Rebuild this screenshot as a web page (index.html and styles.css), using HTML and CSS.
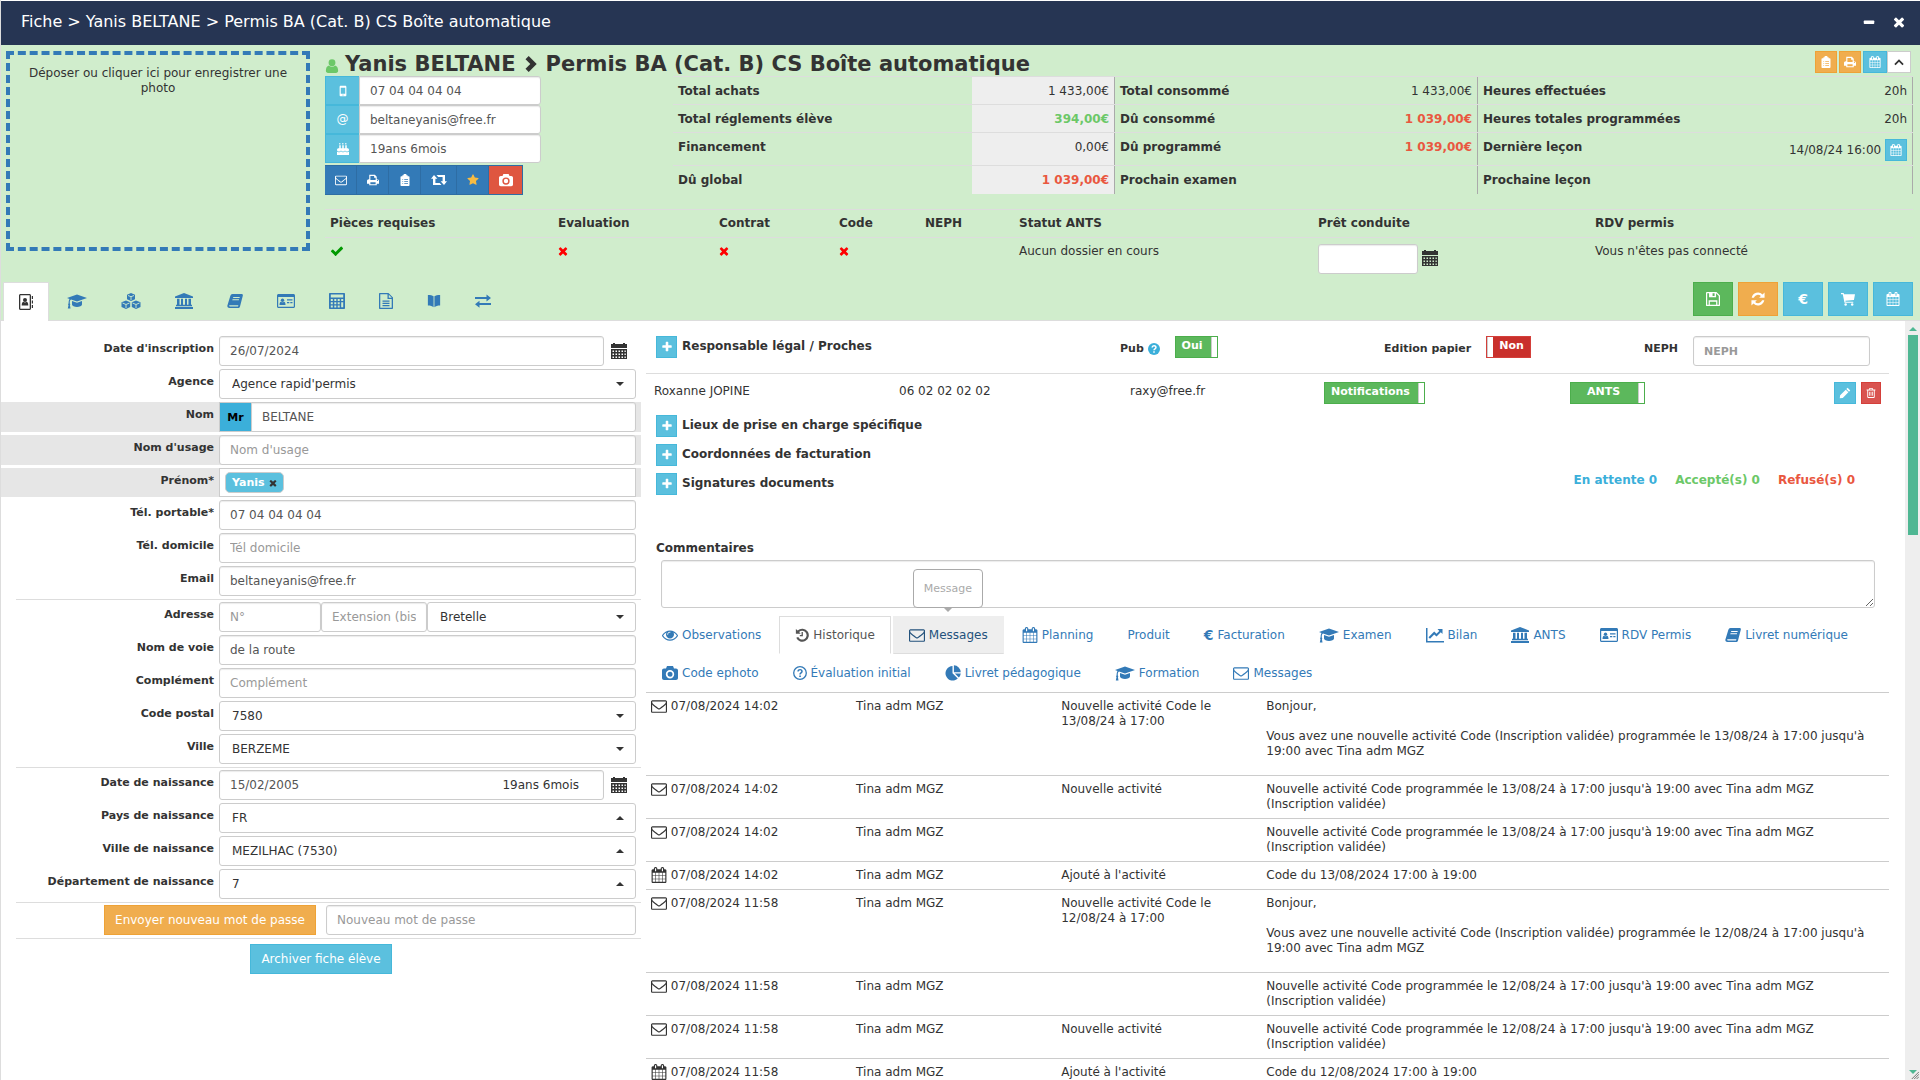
FILE: index.html
```html
<!DOCTYPE html>
<html lang="fr">
<head>
<meta charset="utf-8">
<title>Fiche élève</title>
<link rel="stylesheet" href="styles.css">
</head>
<body>
<svg class="sprite" aria-hidden="true">
  <symbol id="envelope" viewBox="0 0 1792 1792"><path d="M1664 1504v-768q-32 36-69 66-268 206-426 338-51 43-83 67t-86.5 48.5-102.5 24.5h-2q-48 0-102.5-24.5t-86.5-48.5-83-67q-158-132-426-338-37-30-69-66v768q0 13 9.5 22.5t22.5 9.5h1472q13 0 22.5-9.5t9.5-22.5zm0-1051v-24.5l-.5-13-3-12.5-5.5-9-9-7.5-14-2.5h-1472q-13 0-22.5 9.5t-9.5 22.5q0 168 147 284 193 152 401 317 6 5 35 29.5t46 37.5 44.5 31.5 50.5 27.5 43 9h2q20 0 43-9t50.5-27.5 44.5-31.5 46-37.5 35-29.5q208-165 401-317 54-43 100.5-115.5t46.5-131.5zm128-37v1088q0 66-47 113t-113 47h-1472q-66 0-113-47t-47-113v-1088q0-66 47-113t113-47h1472q66 0 113 47t47 113z"/></symbol>
  <symbol id="times" viewBox="192 192 1408 1408"><path d="M1490 1322q0 40-28 68l-136 136q-28 28-68 28t-68-28l-294-294-294 294q-28 28-68 28t-68-28l-136-136q-28-28-28-68t28-68l294-294-294-294q-28-28-28-68t28-68l136-136q28-28 68-28t68 28l294 294 294-294q28-28 68-28t68 28l136 136q28 28 28 68t-28 68l-294 294 294 294q28 28 28 68z"/></symbol>
  <symbol id="check" viewBox="0 0 1792 1792"><path d="M1671 566q0 40-28 68l-724 724-136 136q-28 28-68 28t-68-28l-136-136-362-362q-28-28-28-68t28-68l136-136q28-28 68-28t68 28l294 295 656-657q28-28 68-28t68 28l136 136q28 28 28 68z"/></symbol>
  <symbol id="plus" viewBox="0 0 1792 1792"><path d="M1600 736v192q0 40-28 68t-68 28h-416v416q0 40-28 68t-68 28h-192q-40 0-68-28t-28-68v-416h-416q-40 0-68-28t-28-68v-192q0-40 28-68t68-28h416v-416q0-40 28-68t68-28h192q40 0 68 28t28 68v416h416q40 0 68 28t28 68z"/></symbol>
  <symbol id="star" viewBox="0 0 1792 1792"><path d="M1728 647q0 22-26 48l-363 354 86 500q1 7 1 20 0 21-10.5 35.5t-30.5 14.5q-19 0-40-12l-449-236-449 236q-22 12-40 12-21 0-31.5-14.5t-10.5-35.5q0-6 2-20l86-500-364-354q-25-27-25-48 0-37 56-46l502-73 225-455q19-41 49-41t49 41l225 455 502 73q56 9 56 46z"/></symbol>
  <symbol id="calendar" viewBox="0 0 1792 1792"><path d="M192 1664h288v-288h-288v288zm352 0h320v-288h-320v288zm-352-352h288v-320h-288v320zm352 0h320v-320h-320v320zm-352-384h288v-288h-288v288zm736 736h320v-288h-320v288zm-384-736h320v-288h-320v288zm768 736h288v-288h-288v288zm-384-352h320v-320h-320v320zm-352-864v-288q0-13-9.5-22.5t-22.5-9.5h-64q-13 0-22.5 9.5t-9.5 22.5v288q0 13 9.5 22.5t22.5 9.5h64q13 0 22.5-9.5t9.5-22.5zm736 864h288v-320h-288v320zm-384-384h320v-288h-320v288zm384 0h288v-288h-288v288zm32-480v-288q0-13-9.5-22.5t-22.5-9.5h-64q-13 0-22.5 9.5t-9.5 22.5v288q0 13 9.5 22.5t22.5 9.5h64q13 0 22.5-9.5t9.5-22.5zm384-64v1280q0 52-38 90t-90 38h-1408q-52 0-90-38t-38-90v-1280q0-52 38-90t90-38h128v-96q0-66 47-113t113-47h64q66 0 113 47t47 113v96h384v-96q0-66 47-113t113-47h64q66 0 113 47t47 113v96h128q52 0 90 38t38 90z"/></symbol>
  <symbol id="eye" viewBox="0 0 1792 1792"><path d="M1664 960q-152-236-381-353 61 104 61 225 0 185-131.5 316.5t-316.5 131.5-316.5-131.5-131.5-316.5q0-121 61-225-229 117-381 353 133 205 333.5 326.5t434.5 121.5 434.5-121.5 333.5-326.5zm-720-384q0-20-14-34t-34-14q-125 0-214.5 89.5t-89.5 214.5q0 20 14 34t34 14 34-14 14-34q0-86 61-147t147-61q20 0 34-14t14-34zm848 384q0 34-20 69-140 230-376.5 368.5t-499.5 138.5-499.5-139-376.5-368q-20-35-20-69t20-69q140-229 376.5-368t499.5-139 499.5 139 376.5 368q20 35 20 69z"/></symbol>
  <symbol id="minus" viewBox="0 0 16 16"><rect x="1" y="6" width="14" height="4.500" rx="1"/></symbol>
  <symbol id="user" viewBox="0 0 16 16"><circle cx="8" cy="4.200" r="3.900"/><path d="M4.500 7.500C2 8 1 10.500 1 13.500c0 1.600 1 2.500 2.500 2.500h9c1.500 0 2.500-.9 2.500-2.500 0-3-1-5.500-3.500-6C10 9.300 6 9.300 4.500 7.500z"/></symbol>
  <symbol id="chevron-right" viewBox="0 0 16 16"><path d="M2.500 3.200 5.700 0l8 8-8 8-3.200-3.200L7.300 8z"/></symbol>
  <symbol id="chevron-up" viewBox="0 0 16 16"><path d="M2.500 13 .5 11 8 3.500l7.500 7.500-2 2L8 7.500z"/></symbol>
  <symbol id="mobile" viewBox="0 0 16 16"><path fill-rule="evenodd" d="M5 1h6c.8 0 1.500.7 1.500 1.500v11c0 .8-.7 1.500-1.500 1.500H5c-.8 0-1.500-.7-1.500-1.500v-11C3.500 1.700 4.200 1 5 1zm0 2.500v8h6v-8zm2.200 9.800a.8.800 0 1 0 1.600 0 .8.800 0 1 0-1.600 0z"/></symbol>
  <symbol id="cake" viewBox="0 0 16 16"><path d="M3 3h2v4H3zm4 0h2v4H7zm4 0h2v4h-2zM3 0h1.500v2H3zm4 0h1.500v2H7zm4 0h1.500v2H11zM2 7h12c1 0 2 .8 2 2v1.300c-1 0-1.500 1-2.700 1s-1.600-1-2.600-1-1.500 1-2.700 1-1.700-1-2.700-1-1.500 1-2.600 1S1 10.300 0 10.300V9c0-1.200 1-2 2-2zM0 11.500c1 0 1.500.9 2.700.9s1.600-1 2.600-1 1.500 1 2.700 1 1.700-1 2.700-1 1.500 1 2.600 1 1.700-.9 2.700-.9V16H0z"/></symbol>
  <symbol id="print" viewBox="0 0 16 16"><path fill-rule="evenodd" d="M3 1h7.500L13 3.500V7h.5C15 7 16 8 16 9.300V13h-3v2H3v-2H0V9.300C0 8 1 7 2.500 7H3zm1.500 1.500V8h7V5H9.500V2.500zm0 8.500v2.500h7V11zm8.700-2.500a.7.700 0 1 0 1.400 0 .7.700 0 1 0-1.400 0z"/></symbol>
  <symbol id="clipboard" viewBox="0 0 16 16"><path fill-rule="evenodd" d="M6 1.500a2 2 0 0 1 4 0h1.500V3H13c.6 0 1 .4 1 1v11c0 .6-.4 1-1 1H3c-.6 0-1-.4-1-1V4c0-.6.4-1 1-1h1.500V1.500zM4.500 7v1h1V7zm2.500 0v1h5V7zm-2.500 2.500v1h1v-1zm2.500 0v1h5v-1zM4.500 12v1h1v-1zm2.500 0v1h5v-1z"/></symbol>
  <symbol id="retweet" viewBox="0 0 16 16"><path d="M3 3 0 6.800h2V13h8.500L8.700 11H4.400V6.800h2zM13 13l3-3.800h-2V3H5.500l1.800 2h4.300v4.200h-2z"/></symbol>
  <symbol id="camera" viewBox="0 0 16 16"><path fill-rule="evenodd" d="M5 1h6l1 2.500h2c1.100 0 2 .9 2 2V13c0 1.100-.9 2-2 2H2c-1.100 0-2-.9-2-2V5.500c0-1.100.9-2 2-2h2zm3 4a4.200 4.200 0 1 0 0 8.400A4.200 4.200 0 0 0 8 5zm0 1.700a2.500 2.500 0 1 1 0 5 2.500 2.500 0 0 1 0-5z"/></symbol>
  <symbol id="address-book" viewBox="0 0 16 16"><path fill-rule="evenodd" d="M2.500 0h9c.8 0 1.500.7 1.500 1.500v13c0 .8-.7 1.500-1.500 1.500h-9c-.8 0-1.500-.7-1.500-1.500v-13C1 .7 1.700 0 2.500 0zm-.2 1.300v13.400h9.400V1.300z"/><circle cx="7" cy="6" r="2"/><path d="M3.700 11.500c0-2.500.8-3.500 1.800-3.700 1 .8 2 .8 3 0 1 .2 1.800 1.200 1.800 3.700zM13.800 2H15v3h-1.200zm0 4.500H15v3h-1.200zm0 4.500H15v3h-1.200z"/></symbol>
  <symbol id="graduation" viewBox="0 0 20 16"><path d="M10 1.500 20 5l-10 3.500L4 6.400l-.8.8c-.5 1-.5 2-.4 3.200.7.500.6 1.200.1 1.600l.6 3.500H.8l.7-3.500c-.6-.5-.5-1.200.1-1.600 0-1.500.1-3 .9-4.400L0 5zM5 8l5 1.800L15 8v3.500c0 3.300-10 3.300-10 0z"/></symbol>
  <symbol id="cubes" viewBox="0 0 20 16"><path d="M10 0l4 1.700v4.600L10 8 6 6.300V1.700zM5 7.500l4.200 1.700v4.800L5 16l-4.500-2V9.200zM15 7.500l4.500 1.700V14L15 16l-4.200-2V9.200z"/><path d="M7 2.500l3 1.200 3-1.200M10 3.700V7M1.500 10 5 11.500 8.500 10M5 11.500V15M11.500 10l3.500 1.500 3.500-1.500M15 11.500V15" fill="none" stroke="#d0edcc" stroke-width=".9"/></symbol>
  <symbol id="university" viewBox="0 0 18 16"><path d="M9 0l9 3.500V5H0V3.500zM2 5.800h2.500v6H6v-6h2v6h2v-6h2v6h1.500v-6H16v6h1v1.500H1v-1.500h1zM0 14h18v2H0z"/></symbol>
  <symbol id="book" viewBox="0 0 16 16"><path fill-rule="evenodd" d="M5.500 1h9c1 0 1.600.8 1.300 1.800L13 13.500c-.3 1-1 1.500-2 1.500H2.500C1 15 0 13.700.4 12.400L3.300 3C3.700 1.700 4.400 1 5.500 1zm.8 3-.3 1h6.500l.3-1zm-.7 2.300-.3 1h6.500l.3-1zM2.300 12.300c-.2.700 0 1.200.7 1.200h8l.4-1.200z"/></symbol>
  <symbol id="id-card" viewBox="0 0 18 16"><path fill-rule="evenodd" d="M1.500 1h15c.8 0 1.500.7 1.500 1.500v11c0 .8-.7 1.500-1.500 1.500h-15C.7 15 0 14.300 0 13.500v-11C0 1.700.7 1 1.500 1zM1.200 4v9.800h15.600V4z"/><circle cx="5.500" cy="7.200" r="1.700"/><path d="M2.500 12c0-2 .5-3 1.500-3.300 1 .8 2 .8 3 0 1 .3 1.500 1.300 1.500 3.300zM10 6.300h5.500v1.200H10zM10 9h2.300v1.200H10zm3.300 0h2.200v1.200h-2.200z"/></symbol>
  <symbol id="calculator" viewBox="0 0 16 16"><path fill-rule="evenodd" d="M1 0h14c.6 0 1 .4 1 1v14c0 .6-.4 1-1 1H1c-.6 0-1-.4-1-1V1c0-.6.4-1 1-1zm.8 1.500v3h12.400v-3zm0 4.500v2h2v-2zm3.500 0v2h2v-2zm3.400 0v2h2v-2zm3.500 0v2h2v-2zM1.800 9.300v2h2v-2zm3.500 0v2h2v-2zm3.400 0v2h2v-2zm3.500 0v5h2v-5zM1.800 12.500v2h2v-2zm3.500 0v2h2v-2zm3.400 0v2h2v-2z"/></symbol>
  <symbol id="file-text" viewBox="0 0 14 16"><path fill-rule="evenodd" d="M1 0h8.500L14 4.500V15c0 .6-.4 1-1 1H1c-.6 0-1-.4-1-1V1c0-.6.4-1 1-1zm.3 1.300v13.400h11.400V6H8.500V1.300zm8.500.5v3h3zM3.500 7.500h7v1.200h-7zm0 2.300h7V11h-7zm0 2.300h7v1.200h-7z"/></symbol>
  <symbol id="open-book" viewBox="0 0 16 16"><path d="M1 1c3 0 5 .3 6.500 1.500V15C6 13.500 4 13 1 13zM15 1c-3 0-5 .3-6.500 1.500V15c1.500-1.500 3.500-2 6.500-2z"/></symbol>
  <symbol id="exchange" viewBox="0 0 16 16"><path d="M0 4h11.500V1.500L16 5l-4.500 3.500V6H0zM16 10H4.500V7.800L0 11.300l4.500 3.500V12H16z"/></symbol>
  <symbol id="floppy" viewBox="0 0 16 16"><path fill-rule="evenodd" d="M1 0h11l4 4v11c0 .6-.4 1-1 1H1c-.6 0-1-.4-1-1V1c0-.6.4-1 1-1zm.4 1.400v13.200H3V9.500h10v5.100h1.600V4.700l-3.100-3.200V6H3.500V1.400zm6.100 0v3.300h2.300V1.400zM4.400 11v3.600h7.200V11z"/></symbol>
  <symbol id="refresh" viewBox="0 0 16 16"><path d="M.8 6.500A7.300 7.300 0 0 1 13.200 2.800L15.500.7v6H9.300l2-2A4.800 4.800 0 0 0 3.300 6.500zM15.200 9.500A7.300 7.300 0 0 1 2.800 13.200L.5 15.300v-6h6.200l-2 2a4.800 4.800 0 0 0 8-1.800z"/></symbol>
  <symbol id="cart" viewBox="0 0 16 16"><path d="M0 1h3l.5 1.600H16L14.800 9 5 10l.2 1H14v1.400H4L2 2.500H0z"/><circle cx="5.300" cy="14.300" r="1.400"/><circle cx="12.800" cy="14.300" r="1.400"/></symbol>
  <symbol id="question" viewBox="0 0 16 16"><circle cx="8" cy="8" r="8"/><path d="M5.500 6C5.600 2.700 10.600 3 10.600 6 10.600 7.800 8 7.800 8 9.700" fill="none" stroke="#fff" stroke-width="2"/><path d="M7 11h2v2H7z" fill="#fff"/></symbol>
  <symbol id="question-o" viewBox="0 0 16 16"><circle cx="8" cy="8" r="7.200" fill="none" stroke="currentColor" stroke-width="1.500"/><path d="M5.800 6.300C5.800 3.300 10.300 3.600 10.300 6.200 10.300 7.800 8 7.800 8 9.700" fill="none" stroke="currentColor" stroke-width="1.700"/><path d="M7.100 10.800h1.900v1.900H7.100z"/></symbol>
  <symbol id="pencil" viewBox="0 0 16 16"><path d="M11.500 1 15 4.500 13.300 6.200 9.800 2.700zM9 3.500 12.500 7 5 14.500 1 15l.5-4z"/></symbol>
  <symbol id="trash" viewBox="0 0 16 16"><path fill-rule="evenodd" d="M5.500 0h5l1 2.500H15V4h-1v10.500c0 .8-.6 1.500-1.400 1.500H3.400C2.600 16 2 15.300 2 14.500V4H1V2.500h3.500zm.8 1.200-.5 1.300h4.400l-.5-1.300zM3.500 4v10.500h9V4zM5 6h1.200v6.500H5zm2.400 0h1.200v6.500H7.400zm2.400 0H11v6.500H9.800z"/></symbol>
  <symbol id="history" viewBox="0 0 16 16"><path d="M1 1v5.500h5.500L4.700 4.700a5 5 0 1 1-1 5.600l-2.300.9A7.500 7.500 0 1 0 3 2.900zM7.500 4.500H9v5H5.500V8h2z"/></symbol>
  <symbol id="pie" viewBox="0 0 16 16"><path d="M7.500 1v7.300l5.300 5.300A7.300 7.300 0 1 1 7.500 1zM8.900.3A7 7 0 0 1 15.700 7.200H8.900zM9.800 8.600h6a7 7 0 0 1-2 4z"/></symbol>
  <symbol id="chart" viewBox="0 0 18 16"><path d="M0 1h1.500v13H18v1.500H0zM16.500 2v5l-1.700-1.700L10.500 9.600l-2.300-2.200L4 11.700 2.500 10.200l5.700-5.700 2.300 2.300L13.300 4 11.500 2z"/></symbol>
  <symbol id="date-grid" viewBox="0 0 16 16"><path fill-rule="evenodd" d="M2 0h2v1h8V0h2v1h2v4H0V1h2zM0 6h16v10H0zm1.500 1.500V9H3V7.500zm3 0V9H6V7.500zm3 0V9H9V7.500zm3 0V9H12V7.500zm3 0V9h1.300V7.500zm-12 3V12H3v-1.500zm3 0V12H6v-1.500zm3 0V12H9v-1.500zm3 0V12H12v-1.500zm3 0V12h1.300v-1.500zm-12 3V15H3v-1.500zm3 0V15H6v-1.500zm3 0V15H9v-1.500zm3 0V15H12v-1.500zm3 0V15h1.300v-1.500z"/></symbol>
  <symbol id="grip" viewBox="0 0 10 10"><path d="M1 10 10 1M4 10l6-6M7 10l3-3" stroke="#555" stroke-width="1" fill="none"/></symbol>
</svg>

<div class="app">
  <header class="titlebar">
    <h1>Fiche &gt; Yanis BELTANE &gt; Permis BA (Cat. B) CS Boîte automatique</h1>
    <div class="window-actions">
      <button type="button" aria-label="Réduire"><svg class="i12"><use href="#minus"/></svg></button>
      <button type="button" aria-label="Fermer"><svg class="i12"><use href="#times"/></svg></button>
    </div>
  </header>

  <section class="summary">
    <div class="summary-top">
      <button type="button" class="dropzone">Déposer ou cliquer ici pour enregistrer une photo</button>
      <div class="summary-main">
        <div class="summary-title">
          <h2><svg class="i14 green"><use href="#user"/></svg><span>Yanis BELTANE</span><svg class="i18"><use href="#chevron-right"/></svg><span>Permis BA (Cat. B) CS Boîte automatique</span></h2>
          <div class="quick">
            <button type="button" class="btn sm orange" aria-label="Dossier"><svg class="i12"><use href="#clipboard"/></svg></button>
            <button type="button" class="btn sm orange" aria-label="Imprimer"><svg class="i12"><use href="#print"/></svg></button>
            <span class="joined"><button type="button" class="btn sm info" aria-label="Calendrier"><svg class="i12"><use href="#calendar"/></svg></button><button type="button" class="btn sm plain" aria-label="Replier"><svg class="i10"><use href="#chevron-up"/></svg></button></span>
          </div>
        </div>
        <div class="summary-data">
          <div class="contact">
            <div class="group"><label for="c-tel"><svg class="i12"><use href="#mobile"/></svg></label><input id="c-tel" value="07 04 04 04 04"></div>
            <div class="group"><label for="c-mail">@</label><input id="c-mail" value="beltaneyanis@free.fr"></div>
            <div class="group"><label for="c-age"><svg class="i12"><use href="#cake"/></svg></label><input id="c-age" value="19ans 6mois"></div>
            <div class="toolbar">
              <button type="button" aria-label="Message"><svg class="i12"><use href="#envelope"/></svg></button>
              <button type="button" aria-label="Imprimer"><svg class="i12"><use href="#print"/></svg></button>
              <button type="button" aria-label="Dossier"><svg class="i12"><use href="#clipboard"/></svg></button>
              <button type="button" aria-label="Transférer"><svg class="i16"><use href="#retweet"/></svg></button>
              <button type="button" class="gold" aria-label="Favori"><svg class="i12"><use href="#star"/></svg></button>
              <button type="button" class="danger" aria-label="Photo"><svg class="i14"><use href="#camera"/></svg></button>
            </div>
          </div>
          <table class="stats shaded">
            <tr><th>Total achats</th><td>1 433,00€</td></tr>
            <tr><th>Total réglements élève</th><td class="pos">394,00€</td></tr>
            <tr class="tall"><th>Financement</th><td>0,00€</td></tr>
            <tr><th>Dû global</th><td class="neg">1 039,00€</td></tr>
          </table>
          <table class="stats">
            <tr><th>Total consommé</th><td>1 433,00€</td></tr>
            <tr><th>Dû consommé</th><td class="neg">1 039,00€</td></tr>
            <tr class="tall"><th>Dû programmé</th><td class="neg">1 039,00€</td></tr>
            <tr><th>Prochain examen</th><td></td></tr>
          </table>
          <table class="stats">
            <tr><th>Heures effectuées</th><td>20h</td></tr>
            <tr><th>Heures totales programmées</th><td>20h</td></tr>
            <tr class="tall"><th>Dernière leçon</th><td class="lesson">14/08/24 16:00 <button type="button" class="btn sm info" aria-label="Voir la leçon"><svg class="i12"><use href="#calendar"/></svg></button></td></tr>
            <tr><th>Prochaine leçon</th><td></td></tr>
          </table>
        </div>
        <table class="status">
          <colgroup><col class="k1"><col class="k2"><col class="k3"><col class="k4"><col class="k5"><col class="k6"><col class="k7"><col></colgroup>
          <thead><tr><th>Pièces requises</th><th>Evaluation</th><th>Contrat</th><th>Code</th><th>NEPH</th><th>Statut ANTS</th><th>Prêt conduite</th><th>RDV permis</th></tr></thead>
          <tbody><tr>
            <td><svg class="i14 yes"><use href="#check"/></svg></td>
            <td><svg class="i10 no"><use href="#times"/></svg></td>
            <td><svg class="i10 no"><use href="#times"/></svg></td>
            <td><svg class="i10 no"><use href="#times"/></svg></td>
            <td></td>
            <td>Aucun dossier en cours</td>
            <td><span class="ready"><input aria-label="Prêt conduite"><svg class="i16"><use href="#date-grid"/></svg></span></td>
            <td>Vous n'êtes pas connecté</td>
          </tr></tbody>
        </table>
      </div>
    </div>
    <div class="summary-nav">
      <nav class="icon-tabs">
        <a href="#" class="active" aria-label="Identité"><svg class="i16"><use href="#address-book"/></svg></a>
        <a href="#" aria-label="Formation"><svg class="i20"><use href="#graduation"/></svg></a>
        <a href="#" aria-label="Produits"><svg class="i20"><use href="#cubes"/></svg></a>
        <a href="#" aria-label="ANTS"><svg class="i18"><use href="#university"/></svg></a>
        <a href="#" aria-label="Livret"><svg class="i16"><use href="#book"/></svg></a>
        <a href="#" aria-label="Permis"><svg class="i18"><use href="#id-card"/></svg></a>
        <a href="#" aria-label="Comptabilité"><svg class="i16"><use href="#calculator"/></svg></a>
        <a href="#" aria-label="Documents"><svg class="sheet"><use href="#file-text"/></svg></a>
        <a href="#" aria-label="Code"><svg class="i14"><use href="#open-book"/></svg></a>
        <a href="#" aria-label="Échanges"><svg class="i16"><use href="#exchange"/></svg></a>
      </nav>
      <div class="actions">
        <button type="button" class="btn lg success" aria-label="Enregistrer"><svg class="i14"><use href="#floppy"/></svg></button>
        <button type="button" class="btn lg orange" aria-label="Actualiser"><svg class="i14"><use href="#refresh"/></svg></button>
        <button type="button" class="btn lg info euro" aria-label="Paiement">€</button>
        <button type="button" class="btn lg info" aria-label="Panier"><svg class="i14"><use href="#cart"/></svg></button>
        <button type="button" class="btn lg info" aria-label="Planning"><svg class="i14"><use href="#calendar"/></svg></button>
      </div>
    </div>
  </section>

  <div class="content">
    <form class="identity">
      <div class="row"><label for="f1">Date d'inscription</label><div class="field dated"><input id="f1" value="26/07/2024"><svg class="i16"><use href="#date-grid"/></svg></div></div>
      <div class="row"><label for="f2">Agence</label><div class="field pick"><select id="f2"><option>Agence rapid'permis</option></select></div></div>
      <div class="row gray"><label for="f3">Nom</label><div class="field civil"><button type="button">Mr</button><input id="f3" value="BELTANE"></div></div>
      <div class="row gray"><label for="f4">Nom d'usage</label><div class="field"><input id="f4" placeholder="Nom d'usage"></div></div>
      <div class="row gray short"><label for="f5">Prénom*</label><div class="field tags"><span class="tag">Yanis <button type="button" aria-label="Retirer"><svg class="i8"><use href="#times"/></svg></button></span><input id="f5"></div></div>
      <div class="row"><label for="f6">Tél. portable*</label><div class="field"><input id="f6" value="07 04 04 04 04"></div></div>
      <div class="row"><label for="f7">Tél. domicile</label><div class="field"><input id="f7" placeholder="Tél domicile"></div></div>
      <div class="row"><label for="f8">Email</label><div class="field"><input id="f8" value="beltaneyanis@free.fr"></div></div>
      <hr>
      <div class="row"><label for="f9">Adresse</label><div class="field street"><input id="f9" placeholder="N°"><input aria-label="Extension" placeholder="Extension (bis, ter)"><div class="pick"><select aria-label="Type de voie"><option>Bretelle</option></select></div></div></div>
      <div class="row"><label for="f10">Nom de voie</label><div class="field"><input id="f10" value="de la route"></div></div>
      <div class="row"><label for="f11">Complément</label><div class="field"><input id="f11" placeholder="Complément"></div></div>
      <div class="row"><label for="f12">Code postal</label><div class="field pick"><select id="f12"><option>7580</option></select></div></div>
      <div class="row"><label for="f13">Ville</label><div class="field pick"><select id="f13"><option>BERZEME</option></select></div></div>
      <hr>
      <div class="row"><label for="f14">Date de naissance</label><div class="field dated"><input id="f14" value="15/02/2005"><span class="age">19ans 6mois</span><svg class="i16"><use href="#date-grid"/></svg></div></div>
      <div class="row"><label for="f15">Pays de naissance</label><div class="field pick up"><select id="f15"><option>FR</option></select></div></div>
      <div class="row"><label for="f16">Ville de naissance</label><div class="field pick up"><select id="f16"><option>MEZILHAC (7530)</option></select></div></div>
      <div class="row"><label for="f17">Département de naissance</label><div class="field pick up"><select id="f17"><option>7</option></select></div></div>
      <hr>
      <div class="password"><button type="button" class="btn orange">Envoyer nouveau mot de passe</button><input type="password" aria-label="Nouveau mot de passe" placeholder="Nouveau mot de passe"></div>
      <hr>
      <div class="archive"><button type="button" class="btn info">Archiver fiche élève</button></div>
    </form>

    <main class="details">
      <div class="options">
        <h3><button type="button" class="btn sm info" aria-label="Ajouter"><svg class="i12"><use href="#plus"/></svg></button>Responsable légal / Proches</h3>
        <div class="opt"><span class="opt-name">Pub <svg class="i12 blue"><use href="#question"/></svg></span><label class="toggle"><span>Oui</span><input type="checkbox" checked></label></div>
        <div class="opt paper"><span class="opt-name">Edition papier</span><label class="toggle off"><input type="checkbox"><span>Non</span></label></div>
        <div class="opt neph"><label class="opt-name" for="neph">NEPH</label><input id="neph" placeholder="NEPH"></div>
      </div>
      <div class="relative">
        <span>Roxanne JOPINE</span><span>06 02 02 02 02</span><span>raxy@free.fr</span>
        <label class="toggle"><span>Notifications</span><input type="checkbox" checked></label>
        <label class="toggle wide"><span>ANTS</span><input type="checkbox" checked></label>
        <div class="edit"><button type="button" class="btn sm info" aria-label="Modifier"><svg class="i12"><use href="#pencil"/></svg></button><button type="button" class="btn sm delete" aria-label="Supprimer"><svg class="i10"><use href="#trash"/></svg></button></div>
      </div>
      <div class="sections">
        <h3><button type="button" class="btn sm info" aria-label="Ajouter"><svg class="i12"><use href="#plus"/></svg></button>Lieux de prise en charge spécifique</h3>
        <h3><button type="button" class="btn sm info" aria-label="Ajouter"><svg class="i12"><use href="#plus"/></svg></button>Coordonnées de facturation</h3>
        <div class="signatures">
          <h3><button type="button" class="btn sm info" aria-label="Ajouter"><svg class="i12"><use href="#plus"/></svg></button>Signatures documents</h3>
          <p><span class="blue">En attente 0</span><span class="pos">Accepté(s) 0</span><span class="neg">Refusé(s) 0</span></p>
        </div>
      </div>
      <div class="comments">
        <label for="comments">Commentaires</label>
        <textarea id="comments"></textarea>
      </div>
      <nav class="tabs">
        <a href="#"><svg class="i16"><use href="#eye"/></svg> Observations</a>
        <a href="#" class="active"><svg class="i14"><use href="#history"/></svg> Historique</a>
        <a href="#" class="hover"><svg class="i16"><use href="#envelope"/></svg> Messages<span class="tip" role="tooltip">Message</span></a>
        <a href="#"><svg class="i16"><use href="#calendar"/></svg> Planning</a>
        <a href="#">Produit</a>
        <a href="#"><b>€</b> Facturation</a>
        <a href="#"><svg class="i20"><use href="#graduation"/></svg> Examen</a>
        <a href="#"><svg class="i18"><use href="#chart"/></svg> Bilan</a>
        <a href="#"><svg class="i18"><use href="#university"/></svg> ANTS</a>
        <a href="#"><svg class="i18"><use href="#id-card"/></svg> RDV Permis</a>
        <a href="#"><svg class="i16"><use href="#book"/></svg> Livret numérique</a>
        <a href="#"><svg class="i16"><use href="#camera"/></svg> Code ephoto</a>
        <a href="#"><svg class="i14"><use href="#question-o"/></svg> Évaluation initial</a>
        <a href="#"><svg class="i16"><use href="#pie"/></svg> Livret pédagogique</a>
        <a href="#"><svg class="i20"><use href="#graduation"/></svg> Formation</a>
        <a href="#"><svg class="i16"><use href="#envelope"/></svg> Messages</a>
      </nav>
      <table class="history">
        <colgroup><col class="narrow"><col class="narrow"><col class="narrow"><col></colgroup>
        <tr><td><svg class="i16"><use href="#envelope"/></svg> 07/08/2024 14:02</td><td>Tina adm MGZ</td><td>Nouvelle activité Code le<br>13/08/24 à 17:00</td><td><p>Bonjour,<br><br>Vous avez une nouvelle activité Code (Inscription validée) programmée le 13/08/24 à 17:00 jusqu'à 19:00 avec Tina adm MGZ</p></td></tr>
        <tr><td><svg class="i16"><use href="#envelope"/></svg> 07/08/2024 14:02</td><td>Tina adm MGZ</td><td>Nouvelle activité</td><td>Nouvelle activité Code programmée le 13/08/24 à 17:00 jusqu'à 19:00 avec Tina adm MGZ<br>(Inscription validée)</td></tr>
        <tr><td><svg class="i16"><use href="#envelope"/></svg> 07/08/2024 14:02</td><td>Tina adm MGZ</td><td></td><td>Nouvelle activité Code programmée le 13/08/24 à 17:00 jusqu'à 19:00 avec Tina adm MGZ<br>(Inscription validée)</td></tr>
        <tr><td><svg class="i16"><use href="#calendar"/></svg> 07/08/2024 14:02</td><td>Tina adm MGZ</td><td>Ajouté à l'activité</td><td>Code du 13/08/2024 17:00 à 19:00</td></tr>
        <tr><td><svg class="i16"><use href="#envelope"/></svg> 07/08/2024 11:58</td><td>Tina adm MGZ</td><td>Nouvelle activité Code le<br>12/08/24 à 17:00</td><td><p>Bonjour,<br><br>Vous avez une nouvelle activité Code (Inscription validée) programmée le 12/08/24 à 17:00 jusqu'à 19:00 avec Tina adm MGZ</p></td></tr>
        <tr><td><svg class="i16"><use href="#envelope"/></svg> 07/08/2024 11:58</td><td>Tina adm MGZ</td><td></td><td>Nouvelle activité Code programmée le 12/08/24 à 17:00 jusqu'à 19:00 avec Tina adm MGZ<br>(Inscription validée)</td></tr>
        <tr><td><svg class="i16"><use href="#envelope"/></svg> 07/08/2024 11:58</td><td>Tina adm MGZ</td><td>Nouvelle activité</td><td>Nouvelle activité Code programmée le 12/08/24 à 17:00 jusqu'à 19:00 avec Tina adm MGZ<br>(Inscription validée)</td></tr>
        <tr><td><svg class="i16"><use href="#calendar"/></svg> 07/08/2024 11:58</td><td>Tina adm MGZ</td><td>Ajouté à l'activité</td><td>Code du 12/08/2024 17:00 à 19:00</td></tr>
      </table>
    </main>

    <div class="scrollbar" aria-hidden="true"><i class="arrow-up"></i><i class="thumb"></i><i class="arrow-down"></i><svg class="grip"><use href="#grip"/></svg></div>
  </div>
</div>
</body>
</html>
```

FILE: styles.css
```css
* { box-sizing: border-box; }

body {
  margin: 0;
  color: #333;
  background: #fff;
  font: 12px/15px "DejaVu Sans", Verdana, sans-serif;
}

h1, h2, h3, p { margin: 0; }

button, input, select, textarea { font: inherit; color: inherit; margin: 0; }

button { cursor: pointer; padding: 0; border: 0; background: none; }

a { color: #337ab7; text-decoration: none; }

svg { fill: currentColor; flex: none; vertical-align: middle; }

.sprite { position: absolute; width: 0; height: 0; }
.i8 { width: 8px; height: 8px; }
.i10 { width: 10px; height: 10px; }
.i12 { width: 12px; height: 12px; }
.i14 { width: 14px; height: 14px; }
.i16 { width: 16px; height: 16px; }
.i18 { width: 18px; height: 16px; }
.i20 { width: 20px; height: 16px; }
.sheet { width: 14px; height: 16px; }

.green, .pos { color: #6cc868; }
.neg { color: #e9573f; }
.blue { color: #3bafda; }
.yes { color: #090; }
.no { color: #f00; }

/* Window frame */
.app {
  display: flex;
  flex-direction: column;
  height: 100vh;
  padding-top: 1px;
  border-left: 1px solid #ddd;
}

.titlebar {
  flex: none;
  display: flex;
  align-items: center;
  justify-content: space-between;
  height: 44px;
  padding: 0 15px 2px 20px;
  color: #fff;
  background: #263553;
}

.titlebar h1 { font-size: 16px; font-weight: normal; line-height: 20px; }

.window-actions { display: flex; gap: 18px; }

/* Buttons */
.btn {
  display: inline-flex;
  align-items: center;
  justify-content: center;
  height: 30px;
  padding: 0 10px;
  border: 1px solid;
  color: #fff;
}

.btn.sm { height: 22px; padding: 0 4px; }
.btn.lg { width: 40px; height: 34px; padding: 0; }
.btn.info { background: #5bc0de; border-color: #46b8da; }
.btn.orange { background: #f0ad4e; border-color: #eea236; }
.btn.success { background: #5cb85c; border-color: #4cae4c; }
.btn.delete { background: #d9534f; border-color: #d43f3a; }
.btn.plain { color: #333; background: #fff; border-color: #ccc; }
.btn.euro { font-size: 14px; font-weight: bold; }

/* Text boxes */
.group input, .field input, .field select, .ready input, .password input, .neph input, .comments textarea {
  min-width: 0;
  width: 100%;
  height: 30px;
  padding: 0 10px;
  border: 1px solid #ccc;
  border-radius: 3px;
  color: #555;
  background: #fff;
  box-shadow: inset 0 1px 1px rgba(0, 0, 0, .08);
}

::placeholder { color: #999; opacity: 1; }

/* Student summary */
.summary {
  flex: none;
  background: #d0edcc;
  border-bottom: 1px solid #ddd;
}

.summary-top {
  display: flex;
  gap: 15px;
  padding: 6px 7px 0 5px;
}

.dropzone {
  flex: none;
  display: flex;
  justify-content: center;
  width: 304px;
  height: 200px;
  padding: 11px 10px;
  border: 4px dashed #337ab7;
}

.summary-main { flex: 1; min-width: 0; }

.summary-title { display: flex; justify-content: space-between; height: 25px; }

.summary-title h2 {
  display: flex;
  align-items: center;
  gap: 6px;
  font-size: 21px;
  line-height: 26px;
  white-space: nowrap;
}

.summary-title h2 .green { margin-top: 4px; }

.quick { display: flex; gap: 2px; padding-right: 2px; }
.joined { display: flex; }
.joined .btn { width: 24px; }

.summary-data { display: grid; grid-template-columns: 348px 442fr 363fr 435fr; }

.contact { width: 216px; }

.group { display: flex; height: 29px; }

.group label {
  flex: none;
  display: flex;
  align-items: center;
  justify-content: center;
  width: 34px;
  color: #fff;
  background: #5bc0de;
  border: 1px solid #46b8da;
  border-right: 0;
}

.group input { height: 29px; border-radius: 0 3px 3px 0; }

.toolbar { display: flex; width: 198px; margin-top: 2px; }

.toolbar button {
  flex: 1 1 auto;
  display: flex;
  align-items: center;
  justify-content: center;
  height: 30px;
  color: #fff;
  background: #337ab7;
  border: 1px solid #2e6da4;
  border-left-width: 0;
}

.toolbar button.gold { color: #f6bb42; }
.toolbar button.danger { background: #df5640; }

.stats { width: 100%; height: 117px; border-collapse: collapse; border-right: 1px solid #aaa; }
.stats th, .stats td { height: 28px; padding: 1px 5px 0; border-top: 1px solid #ddd; }
.stats .tall th, .stats .tall td { height: 33px; }
.stats .tall th, .stats .tall td:not(.lesson) { padding-bottom: 4px; }
.stats th { text-align: left; }
.stats td { text-align: right; white-space: nowrap; }
.stats.shaded td { width: 143px; background: #eee; }
.stats td.pos, .stats td.neg { font-weight: bold; }
.lesson .btn { vertical-align: middle; }

.status { width: 100%; margin-top: 14px; border-collapse: collapse; table-layout: fixed; }
.status th, .status td { padding: 6px 5px; border-top: 1px solid #ddd; text-align: left; vertical-align: top; }
.status .k1 { width: 228px; }
.status .k2 { width: 161px; }
.status .k3 { width: 120px; }
.status .k4 { width: 86px; }
.status .k5 { width: 94px; }
.status .k6 { width: 299px; }
.status .k7 { width: 277px; }
.status td > svg { display: block; }
.status .no { margin-top: 2px; }

.ready { display: flex; align-items: flex-start; gap: 4px; height: 32px; }
.ready input { width: 100px; }
.ready svg { margin-top: 6px; }

.summary-nav {
  display: flex;
  justify-content: space-between;
  align-items: flex-end;
  padding: 0 7px 0 2px;
}

.icon-tabs { display: flex; gap: 2px; }

.icon-tabs a {
  display: flex;
  align-items: center;
  height: 38px;
  padding: 0 16px;
}

.icon-tabs .active { height: 39px; margin-bottom: -1px; padding: 0 14px; color: #333; background: #fff; border: 1px solid #ddd; border-bottom: 0; }

.actions { display: flex; gap: 5px; padding-bottom: 4px; }

/* Scrolling content */
.content {
  flex: 1;
  min-height: 0;
  display: flex;
  overflow: hidden;
}

.identity { width: 34%; max-width: 640px; flex: none; padding-top: 15px; }

.identity hr { height: 1px; margin: 0 0 2px 15px; border: 0; background: #ddd; }

.row { display: flex; height: 30px; margin-bottom: 3px; padding-right: 5px; }
.row.gray { background: #e6e6e6; }
.row.short { height: 29px; }

.row > label {
  flex: none;
  width: 218px;
  padding: 5px 5px 0 0;
  font-size: 11px;
  font-weight: bold;
  text-align: right;
}

.field { flex: 1; min-width: 0; display: flex; align-items: center; position: relative; }

.dated { padding-right: 9px; gap: 7px; }
.age { position: absolute; right: 57px; }

.pick { position: relative; width: 100%; }

.pick select {
  appearance: none;
  padding: 0 12px;
  color: #333;
  box-shadow: none;
}

.pick::after {
  content: "";
  position: absolute;
  right: 12px;
  top: 13px;
  border: 4px solid transparent;
  border-top-color: #333;
  border-bottom: 0;
}

.pick.up::after { border-top: 0; border-bottom: 4px solid #333; }

.civil button {
  flex: none;
  width: 32px;
  height: 30px;
  border: 1px solid #ccc;
  border-right: 0;
  color: #000;
  background: #3bafda;
  font-size: 11px;
  font-weight: bold;
}

.civil input { border-radius: 0 3px 3px 0; }

.tags { border: 1px solid #ccc; background: #fff; padding-left: 5px; }
.field.tags input { height: 27px; border: 0; box-shadow: none; }

.tag {
  flex: none;
  display: flex;
  align-items: center;
  gap: 4px;
  height: 21px;
  padding: 0 6px;
  border: 1px solid #ccc;
  border-radius: 5px;
  color: #fff;
  background: #5bc0de;
  font-size: 11px;
  font-weight: bold;
}

.tag button { width: auto; height: auto; display: flex; color: #333; }

.street > input:first-child { flex: 0 0 102px; }
.street > input:nth-child(2) { flex: 0 0 106px; }

.password { display: flex; gap: 10px; height: 30px; margin-bottom: 3px; padding: 0 5px 0 103px; }
.password .btn { flex: none; white-space: nowrap; width: 212px; }

.archive { display: flex; justify-content: center; padding-top: 3px; }

/* Right-hand details */
.details { flex: 1; min-width: 0; padding: 0 16px 0 5px; }

h3 { display: flex; gap: 5px; font-size: 12px; line-height: 20px; }
h3 .btn { flex: none; width: 21px; }

.options {
  display: grid;
  grid-template-columns: 464fr 264fr 260fr auto;
  align-items: start;
  padding: 15px 19px 7px 10px;
  border-bottom: 1px solid #ddd;
}

.opt { display: flex; gap: 15px; }
.opt-name { font-size: 11px; font-weight: bold; line-height: 26px; white-space: nowrap; }
.neph { width: 226px; }
.neph input { flex: none; width: 177px; }
.neph ::placeholder { font-size: 11px; font-weight: bold; }

.toggle {
  display: inline-flex;
  height: 22px;
  border: 1px solid #4cae4c;
  color: #fff;
  background: #5cb85c;
  font-size: 11px;
  font-weight: bold;
  line-height: 18px;
}

.toggle span { flex: 1; padding: 0 8px 0 6px; text-align: center; }

.toggle input {
  appearance: none;
  flex: none;
  width: 6px;
  background: #fff;
  border-left: 1px solid #ccc;
}

.toggle.off { background: #c9302c; border-color: #d43f3a; }
.toggle.off span { padding: 0 6px; }
.toggle.wide { width: 75px; }

.relative {
  display: grid;
  grid-template-columns: 245fr 231fr 194fr 246fr 264fr 55px;
  align-items: start;
  justify-items: start;
  padding: 8px 0 0 8px;
}

.relative > span { line-height: 18px; }
.edit { display: flex; gap: 5px; }

.sections { padding: 11px 0 0 10px; display: grid; gap: 7px; }

.signatures { display: flex; justify-content: space-between; }
.signatures p { display: flex; gap: 18px; padding-right: 34px; font-weight: bold; }

.comments { padding: 46px 14px 0 10px; font-weight: bold; }
.comments label { display: block; }
.comments textarea { display: block; width: auto; min-width: calc(100% - 5px); height: 48px; margin: 4px 0 0 5px; }

.tabs { display: flex; flex-wrap: wrap; padding-top: 8px; column-gap: 2px; }

.tabs a {
  position: relative;
  display: flex;
  align-items: center;
  gap: 4px;
  height: 38px;
  padding: 0 15px;
  border: 1px solid transparent;
}

.tabs b { font-size: 14px; }
.tabs .active { color: #555; border-color: #ddd #ddd transparent; }
.tabs .hover { color: #23527c; background: #eee; border-color: #eee #eee #ddd; }

.tip {
  position: absolute;
  left: 19px;
  bottom: 45px;
  padding: 11px 10px;
  border: 1px solid #aaa;
  border-radius: 4px;
  color: #aaa;
  background: #fff;
  font-size: 11px;
}

.tip::after {
  content: "";
  position: absolute;
  left: 50%;
  top: 100%;
  margin-left: -5px;
  border: 5px solid transparent;
  border-top-color: #aaa;
  border-bottom: 0;
}

.history { width: 100%; border-collapse: collapse; table-layout: fixed; }
.history .narrow { width: 16.5%; }
.history td { padding: 6px 5px; border-top: 1px solid #ccc; vertical-align: top; }
.history td:last-child { padding-right: 10px; }
.history p { margin-bottom: 10px; }
.history svg { margin: -2px 0 -1px; }

/* Scroll track */
.scrollbar {
  position: relative;
  flex: none;
  width: 15px;
  display: flex;
  flex-direction: column;
  align-items: center;
  padding: 6px 0;
  background: #eee;
}

.arrow-up { border: 4px solid transparent; border-top: 0; border-bottom: 4px solid #4fb793; }
.thumb { width: 10px; height: 200px; margin-top: 4px; background: #4fb793; }
.arrow-down { margin-top: auto; border: 4px solid transparent; border-bottom: 0; border-top: 4px solid #4fb793; }
.grip { position: absolute; right: 1px; bottom: 1px; width: 8px; height: 8px; }
```
